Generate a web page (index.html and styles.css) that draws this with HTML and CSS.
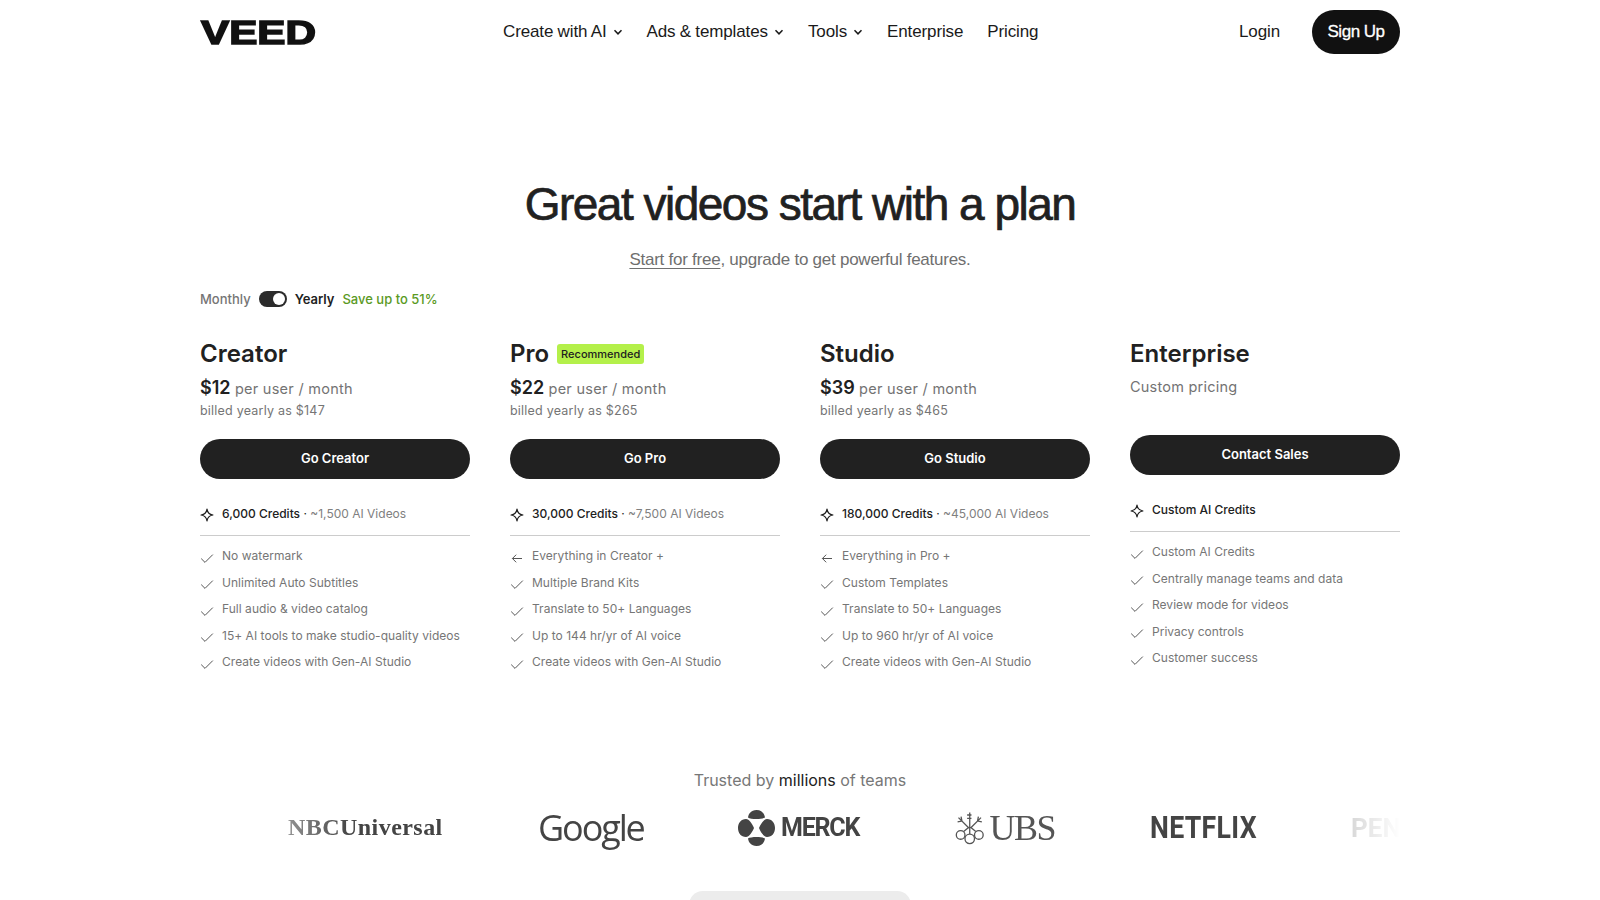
FILE: index.html
```html
<!DOCTYPE html>
<html lang="en">
<head>
<meta charset="utf-8">
<title>VEED Pricing</title>
<link rel="stylesheet" href="styles.css">
</head>
<body>
<svg class="sprites" width="0" height="0" aria-hidden="true">
  <symbol id="chev" viewBox="0 0 10 10"><path d="M1.5 3.2 5 6.8l3.5-3.6" fill="none" stroke="currentColor" stroke-width="1.5"/></symbol>
  <symbol id="spark" viewBox="0 0 16 16"><path d="M8 1.2C8.6 5.2 10.8 7.4 14.8 8 10.8 8.600 8.600 10.800 8 14.800 7.400 10.800 5.200 8.600 1.200 8 5.200 7.400 7.400 5.200 8 1.200Z" fill="none" stroke="currentColor" stroke-width="1.4" stroke-linejoin="round"/></symbol>
  <symbol id="check" viewBox="0 0 14 14"><path d="M1.2 7.6 5 11.4 12.8 3.6" fill="none" stroke="currentColor" stroke-width="1"/></symbol>
  <symbol id="back" viewBox="0 0 14 14"><path d="M12 7.5H2.4M6.2 3.7 2.4 7.5l3.8 3.8" fill="none" stroke="currentColor" stroke-width="1"/></symbol>
</svg>
<header class="nav">
  <a class="logo"><span>VEED</span></a>
  <nav class="nav-links">
    <a>Create with AI <svg class="chev"><use href="#chev"/></svg></a>
    <a>Ads &amp; templates <svg class="chev"><use href="#chev"/></svg></a>
    <a>Tools <svg class="chev"><use href="#chev"/></svg></a>
    <a>Enterprise</a>
    <a>Pricing</a>
  </nav>
  <div class="nav-actions">
    <a class="login">Login</a>
    <a class="signup">Sign Up</a>
  </div>
</header>
<main class="page">
  <section class="hero">
    <h1>Great videos start with a plan</h1>
    <p><a class="u">Start for free</a>, upgrade to get powerful features.</p>
  </section>
  <div class="billing">
    <span class="muted">Monthly</span>
    <span class="switch"><span class="knob"></span></span>
    <strong>Yearly</strong>
    <span class="save">Save up to 51%</span>
  </div>
  <section class="plans">
    <article class="plan">
      <h2>Creator</h2>
      <div class="price"><b>$12</b> per user / month</div>
      <div class="billed">billed yearly as $147</div>
      <a class="cta">Go Creator</a>
      <div class="credits"><svg class="spark"><use href="#spark"/></svg><span><b>6,000 Credits</b> <i>·</i> ~1,500 AI Videos</span></div>
      <ul>
        <li><svg class="ic"><use href="#check"/></svg>No watermark</li>
        <li><svg class="ic"><use href="#check"/></svg>Unlimited Auto Subtitles</li>
        <li><svg class="ic"><use href="#check"/></svg>Full audio &amp; video catalog</li>
        <li><svg class="ic"><use href="#check"/></svg>15+ AI tools to make studio-quality videos</li>
        <li><svg class="ic"><use href="#check"/></svg>Create videos with Gen-AI Studio</li>
      </ul>
    </article>
    <article class="plan">
      <h2>Pro <span class="tag">Recommended</span></h2>
      <div class="price"><b>$22</b> per user / month</div>
      <div class="billed">billed yearly as $265</div>
      <a class="cta">Go Pro</a>
      <div class="credits"><svg class="spark"><use href="#spark"/></svg><span><b>30,000 Credits</b> <i>·</i> ~7,500 AI Videos</span></div>
      <ul>
        <li><svg class="ic"><use href="#back"/></svg>Everything in Creator +</li>
        <li><svg class="ic"><use href="#check"/></svg>Multiple Brand Kits</li>
        <li><svg class="ic"><use href="#check"/></svg>Translate to 50+ Languages</li>
        <li><svg class="ic"><use href="#check"/></svg>Up to 144 hr/yr of AI voice</li>
        <li><svg class="ic"><use href="#check"/></svg>Create videos with Gen-AI Studio</li>
      </ul>
    </article>
    <article class="plan">
      <h2>Studio</h2>
      <div class="price"><b>$39</b> per user / month</div>
      <div class="billed">billed yearly as $465</div>
      <a class="cta">Go Studio</a>
      <div class="credits"><svg class="spark"><use href="#spark"/></svg><span><b>180,000 Credits</b> <i>·</i> ~45,000 AI Videos</span></div>
      <ul>
        <li><svg class="ic"><use href="#back"/></svg>Everything in Pro +</li>
        <li><svg class="ic"><use href="#check"/></svg>Custom Templates</li>
        <li><svg class="ic"><use href="#check"/></svg>Translate to 50+ Languages</li>
        <li><svg class="ic"><use href="#check"/></svg>Up to 960 hr/yr of AI voice</li>
        <li><svg class="ic"><use href="#check"/></svg>Create videos with Gen-AI Studio</li>
      </ul>
    </article>
    <article class="plan">
      <h2>Enterprise</h2>
      <div class="custom">Custom pricing</div>
      <a class="cta">Contact Sales</a>
      <div class="credits"><svg class="spark"><use href="#spark"/></svg><span><b>Custom AI Credits</b></span></div>
      <ul>
        <li><svg class="ic"><use href="#check"/></svg>Custom AI Credits</li>
        <li><svg class="ic"><use href="#check"/></svg>Centrally manage teams and data</li>
        <li><svg class="ic"><use href="#check"/></svg>Review mode for videos</li>
        <li><svg class="ic"><use href="#check"/></svg>Privacy controls</li>
        <li><svg class="ic"><use href="#check"/></svg>Customer success</li>
      </ul>
    </article>
  </section>
  <section class="trust">
    <p>Trusted by <span>millions</span> of teams</p>
    <div class="logos">
      <span class="lg nbc">NBCUniversal</span>
      <span class="lg google">Google</span>
      <span class="lg merck">
        <svg width="37" height="36" viewBox="0 0 37 36"><path fill="#444" d="M18.500 0C13 0 10.500 4 10 7.500C12.500 9.500 24.500 9.500 27 7.500C26.500 4 24 0 18.500 0ZM18.500 36C13 36 10.500 32 10 28.500C12.500 26.500 24.500 26.500 27 28.500C26.500 32 24 36 18.500 36ZM8 9C3 9 0 13 0 18C0 23 3 27 8 27C11 27 14.500 22 16 18C14.500 14 11 9 8 9ZM29 9C34 9 37 13 37 18C37 23 34 27 29 27C26 27 22.500 22 21 18C22.500 14 26 9 29 9Z"/></svg>
        <span>MERCK</span>
      </span>
      <span class="lg ubs">
        <svg width="34" height="38" viewBox="0 0 34 38" fill="none" stroke="#555" stroke-width="1.500"><path d="M17 1v25M4 7l12 12M30 7 18 19M3 12l5-1-1-5M31 12l-5-1 1-5M14 4h5M14 8h5"/><circle cx="6.500" cy="27" r="5"/><circle cx="27.500" cy="27" r="5"/><circle cx="17" cy="31.500" r="5.500"/><path d="M10 23l6-5M24 23l-6-5"/></svg>
        <span>UBS</span>
      </span>
      <span class="lg netflix">NETFLIX</span>
      <span class="lg pen">PEN</span>
    </div>
  </section>
  <div class="peek"></div>
</main>
</body>
</html>
```
FILE: styles.css
```css
* { box-sizing: border-box; }
html, body { margin: 0; height: 900px; overflow: hidden; background: #fff; }
body { font-family: Inter, "Liberation Sans", sans-serif; color: #212121; }
.sprites { position: absolute; }
a { color: inherit; text-decoration: none; }
h1, h2, p, ul { margin: 0; padding: 0; }

.nav { display: flex; align-items: center; width: 1200px; height: 64px; margin: 0 auto; font-family: "Liberation Sans", Arial, sans-serif; font-size: 17px; letter-spacing: -.12px; word-spacing: -.3px; color: #1a1a1a; }
.logo { width: 303px; padding-left: 1px; font: 700 33px/1 "Liberation Sans", Arial, sans-serif; letter-spacing: 0; word-spacing: 0; color: #111; -webkit-text-stroke: 1.5px #111; }
.logo span { display: inline-block; transform: scaleX(1.28); transform-origin: left center; }
.nav-links { display: flex; gap: 24px; }
.nav-links a { display: flex; align-items: center; gap: 6px; }
.chev { width: 10px; height: 10px; }
.nav-actions { display: flex; align-items: center; gap: 32px; margin-left: auto; }
.signup { display: flex; align-items: center; justify-content: center; width: 88px; height: 44px; border-radius: 22px; background: #111; color: #fff; letter-spacing: -.45px; -webkit-text-stroke: .3px #fff; }

.page { width: 1200px; margin: 0 auto; }
.hero { text-align: center; padding-top: 113px; }
h1 { font: 400 46px/54px "Liberation Sans", Arial, sans-serif; letter-spacing: -1.5px; -webkit-text-stroke: .7px #212121; color: #212121; }
.hero p { margin-top: 17px; font: 17px/24px "Liberation Sans", Arial, sans-serif; letter-spacing: -.25px; color: #6f6f6f; }
.u { text-decoration: underline; text-underline-offset: 3px; }

.billing { display: flex; align-items: center; gap: 8px; margin-top: 15px; height: 24px; font-size: 13px; }
.muted { color: #757575; font-weight: 500; }
.billing strong { font-weight: 600; }
.save { color: #5b9a1f; font-weight: 500; }
.switch { display: flex; justify-content: flex-end; align-items: center; width: 28px; height: 16px; padding: 2px; border-radius: 8px; background: #2b2b2b; }
.knob { width: 12px; height: 12px; border-radius: 50%; background: #fff; }

.plans { display: grid; grid-template-columns: repeat(4, 270px); gap: 40px; margin-top: 26px; }
h2 { display: flex; align-items: center; gap: 8px; height: 34px; font-size: 24px; font-weight: 600; line-height: 34px; }
.tag { padding: 3px 4px; border-radius: 3px; background: #b4f04a; font-size: 11px; font-weight: 500; line-height: 14px; }
.price { margin-top: 5px; height: 24px; font-size: 14.5px; line-height: 24px; color: #737373; letter-spacing: .27px; }
.price b { font-size: 18px; font-weight: 600; color: #212121; letter-spacing: 0; }
.billed { height: 20px; margin-top: 1px; font-size: 12.5px; line-height: 20px; color: #757575; letter-spacing: .22px; }
.custom { margin-top: 4px; height: 24px; font-size: 14.5px; line-height: 24px; color: #737373; letter-spacing: .22px; }
.cta { display: flex; align-items: center; justify-content: center; height: 40px; margin-top: 18px; padding-bottom: 2px; border-radius: 20px; background: #212121; color: #fff; font-size: 13px; font-weight: 600; }
.custom + .cta { margin-top: 36px; }
.credits { display: flex; align-items: center; gap: 8px; height: 57px; padding-top: 12px; border-bottom: 1px solid #ccc; font-size: 12px; color: #808080; }
.credits b { font-weight: 500; color: #212121; }
.credits i { font-style: normal; color: #212121; }
.spark { flex: none; width: 14px; height: 14px; color: #212121; position: relative; top: 2px; }
ul { list-style: none; margin-top: 6.3px; }
li { display: flex; align-items: center; gap: 8px; height: 26.6px; font-size: 12px; color: #767676; letter-spacing: .03px; }
.ic { flex: none; width: 14px; height: 14px; color: #555; position: relative; top: 2px; }

.trust { text-align: center; margin-top: 92.7px; }
.trust p { height: 24px; font-size: 16px; line-height: 24px; color: #777; }
.trust p span { color: #212121; }
.logos { display: flex; align-items: center; gap: 95px; height: 60px; margin-top: 6px; padding-left: 88px; overflow: hidden; white-space: nowrap; color: #444; -webkit-mask-image: linear-gradient(90deg, transparent, #000 12.5%, #000 87.5%, transparent); mask-image: linear-gradient(90deg, transparent, #000 12.5%, #000 87.5%, transparent); }
.lg { flex: none; display: flex; align-items: center; }
.nbc { width: 155px; font: 700 24px "Liberation Serif", serif; letter-spacing: .45px; }
.google { width: 105px; font: 400 36px "Open Sans", sans-serif; letter-spacing: -2.1px; }
.merck { width: 122px; gap: 6px; font: 700 25px "Roboto", sans-serif; letter-spacing: -1.2px; }
.ubs { width: 100px; gap: 5px; font: 400 36px "Liberation Serif", serif; letter-spacing: -1.5px; color: #555; }
.netflix { width: 106px; font: 700 31px "Roboto", sans-serif; letter-spacing: .4px; transform: scaleX(.86); transform-origin: left center; }
.pen { font: 700 26px "Roboto", sans-serif; color: #888; }
.peek { width: 222px; height: 40px; margin: 33px auto 0; border-radius: 14px; background: #ececec; }
```
